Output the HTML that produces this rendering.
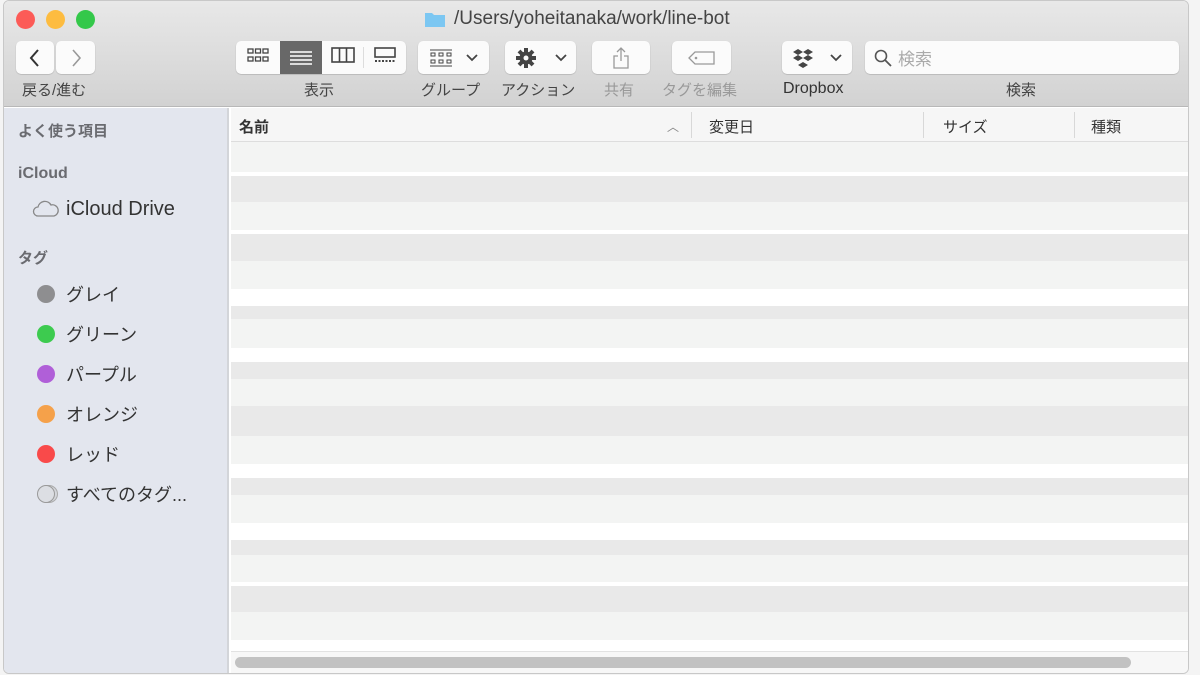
<!DOCTYPE html>
<html><head><meta charset="utf-8"><style>
*{margin:0;padding:0;box-sizing:border-box}
body{width:1200px;height:675px;background:#f4f4f4;position:relative;overflow:hidden;font-family:"Liberation Sans","Noto Sans CJK JP",sans-serif}
.win{position:absolute;left:3px;top:0;width:1186px;height:674px;border-radius:6px;overflow:hidden;background:#fff;border:1px solid #c8c8c8}
.tb{position:absolute;left:0;top:0;width:100%;height:106px;background:linear-gradient(#e8e8e8,#d2d2d2);border-bottom:1px solid #b8b8b8}
.dot{position:absolute;top:9px;width:19px;height:19px;border-radius:50%}
.title{position:absolute;top:7px;left:420px;font-size:19px;color:#444;display:flex;align-items:center;gap:8px}
.btn{position:absolute;top:40px;height:33px;background:#fbfbfb;border-radius:5px;box-shadow:0 0.5px 1px rgba(0,0,0,.25);display:flex;align-items:center;justify-content:center}
.lbl{position:absolute;top:78px;font-size:15px;color:#444;text-align:center}
.sb{position:absolute;left:0;top:107px;width:225px;bottom:0;background:#e3e6ee;border-right:2px solid #d3d5d9}
.sh{position:absolute;left:14px;font-size:15px;color:#6a6b70;font-weight:bold}
.it{position:absolute;left:62px;font-size:18px;color:#333}
.cd{position:absolute;left:33px;width:18px;height:18px;border-radius:50%}
.hd{position:absolute;left:227px;right:0;top:107px;height:34px;background:#f6f6f6;border-bottom:1px solid #ddd;font-size:15px;color:#333}
.hd span{position:absolute;top:8px}
.sep{position:absolute;top:4px;width:1px;height:26px;background:#d8d8d8}
.b{position:absolute;left:227px;right:0}
</style></head><body>
<div class="win">
<div class="tb">
<div class="dot" style="left:12px;background:#fc5b57"></div>
<div class="dot" style="left:42px;background:#fdbc40"></div>
<div class="dot" style="left:72px;background:#34c84a"></div>
<div class="title"><svg width="22" height="18"><path d="M1 3h7l2 2h11v12H1z" fill="#7cc7f2"/></svg>/Users/yoheitanaka/work/line-bot</div>
<div class="btn" style="left:12px;width:38px"><svg width="14" height="20"><path d="M10 2L3 10l7 8" stroke="#333" stroke-width="2" fill="none"/></svg></div>
<div class="btn" style="left:52px;width:39px"><svg width="14" height="20"><path d="M4 2l7 8-7 8" stroke="#999" stroke-width="1.6" fill="none"/></svg></div>
<div class="lbl" style="left:18px">戻る/進む</div>
<div class="btn" style="left:232px;width:170px;justify-content:flex-start;overflow:hidden">
<div style="width:44px;text-align:center"><svg width="22" height="16"><g fill="none" stroke="#444" stroke-width="1.3"><rect x="1" y="2" width="5" height="4"/><rect x="8.5" y="2" width="5" height="4"/><rect x="16" y="2" width="5" height="4"/><rect x="1" y="10" width="5" height="4"/><rect x="8.5" y="10" width="5" height="4"/><rect x="16" y="10" width="5" height="4"/></g></svg></div>
<div style="width:42px;height:33px;background:#686868;display:flex;align-items:center;justify-content:center"><svg width="22" height="16"><path d="M0 2h22M0 6h22M0 10h22M0 14h22" stroke="#fff" stroke-width="1.5"/></svg></div>
<div style="width:42px;text-align:center;border-right:1px solid #ddd"><svg width="24" height="16"><rect x="1" y="1" width="22" height="14" fill="none" stroke="#444" stroke-width="1.6"/><path d="M8.5 1v14M15.5 1v14" stroke="#444" stroke-width="1.6"/></svg></div>
<div style="width:42px;text-align:center"><svg width="24" height="18"><rect x="2" y="2" width="20" height="9" fill="none" stroke="#444" stroke-width="1.6"/><path d="M2 15h20" stroke="#444" stroke-width="2" stroke-dasharray="2 1.5"/></svg></div>
</div>
<div class="lbl" style="left:300px">表示</div>
<div class="btn" style="left:414px;width:71px;gap:14px"><svg width="22" height="18"><path d="M0 1h22M0 17h22" stroke="#444"/><g fill="none" stroke="#444"><rect x="1" y="4" width="4" height="3"/><rect x="9" y="4" width="4" height="3"/><rect x="17" y="4" width="4" height="3"/><rect x="1" y="11" width="4" height="3"/><rect x="9" y="11" width="4" height="3"/><rect x="17" y="11" width="4" height="3"/></g></svg><svg width="12" height="8"><path d="M1 1l5 5 5-5" stroke="#444" stroke-width="1.8" fill="none"/></svg></div>
<div class="lbl" style="left:417px">グループ</div>
<div class="btn" style="left:501px;width:71px;gap:18px"><svg width="22" height="22" viewBox="0 0 22 22"><g stroke="#444" stroke-width="4"><path d="M11 1v20M1 11h20M4 4l14 14M18 4L4 18"/></g><circle cx="11" cy="11" r="6.5" fill="#444"/><circle cx="11" cy="11" r="2.5" fill="#fbfbfb"/></svg><svg width="12" height="8"><path d="M1 1l5 5 5-5" stroke="#444" stroke-width="1.8" fill="none"/></svg></div>
<div class="lbl" style="left:497px">アクション</div>
<div class="btn" style="left:588px;width:58px"><svg width="18" height="24"><path d="M9 2v13M5 6l4-4 4 4M6 10H2v12h14V10h-4" stroke="#999" stroke-width="1.3" fill="none"/></svg></div>
<div class="lbl" style="left:600px;color:#999">共有</div>
<div class="btn" style="left:668px;width:59px"><svg width="28" height="16"><path d="M1 8l6-6h19v12H7z" stroke="#999" stroke-width="1.3" fill="none"/><circle cx="8" cy="8" r="1.3" fill="#999"/></svg></div>
<div class="lbl" style="left:658px;color:#999">タグを編集</div>
<div class="btn" style="left:778px;width:70px;gap:16px"><svg width="22" height="20"><g fill="#444"><path d="M6 1l5 3-5 3-5-3zM16 1l5 3-5 3-5-3zM6 7l5 3-5 3-5-3zM16 7l5 3-5 3-5-3zM11 14l5 3-5 3-5-3z"/></g></svg><svg width="12" height="8"><path d="M1 1l5 5 5-5" stroke="#444" stroke-width="1.8" fill="none"/></svg></div>
<div class="lbl" style="left:779px;top:79px;color:#333;font-size:16px">Dropbox</div>
<div class="btn" style="left:861px;width:314px;justify-content:flex-start;padding-left:9px;gap:6px"><svg width="18" height="18"><circle cx="7" cy="7" r="5.5" stroke="#555" stroke-width="1.6" fill="none"/><path d="M11 11l6 6" stroke="#555" stroke-width="1.8"/></svg><span style="font-size:17px;color:#aaa">検索</span></div>
<div class="lbl" style="left:1002px">検索</div>
</div>
<div class="sb">
<div class="sh" style="top:12px">よく使う項目</div>
<div class="sh" style="top:57px;font-size:16px">iCloud</div>
<svg style="position:absolute;left:28px;top:90px" width="28" height="20"><path d="M6 18a4.5 4.5 0 0 1 0-9 7 7 0 0 1 13-2 5.5 5.5 0 0 1 3 11z" fill="none" stroke="#888" stroke-width="1.3"/></svg>
<div class="it" style="top:90px;font-size:20px">iCloud Drive</div>
<div class="sh" style="top:139px">タグ</div>
<div class="cd" style="top:177px;background:#8e8e90"></div><div class="it" style="top:173px">グレイ</div>
<div class="cd" style="top:217px;background:#3dcb4f"></div><div class="it" style="top:213px">グリーン</div>
<div class="cd" style="top:257px;background:#b05fd8"></div><div class="it" style="top:253px">パープル</div>
<div class="cd" style="top:297px;background:#f5a14a"></div><div class="it" style="top:293px">オレンジ</div>
<div class="cd" style="top:337px;background:#f94a4a"></div><div class="it" style="top:333px">レッド</div>
<div class="cd" style="top:377px;left:36px;background:#d4d6db;border:1px solid #aaa"></div><div class="cd" style="top:377px;background:#dcdee3;border:1px solid #999"></div><div class="it" style="top:373px">すべてのタグ...</div>
</div>
<div class="hd"><span style="left:8px;font-weight:bold">名前</span><span style="left:436px;color:#888;font-size:12px;top:10px">︿</span><div class="sep" style="left:460px"></div><span style="left:478px">変更日</span><div class="sep" style="left:692px"></div><span style="left:712px">サイズ</span><div class="sep" style="left:843px"></div><span style="left:860px">種類</span></div>
<div class="b" style="top:141px;height:510px;background:#f3f4f3"></div>
<div class="b" style="top:171px;height:4px;background:#fff"></div>
<div class="b" style="top:175px;height:26px;background:#e9e9e9"></div>
<div class="b" style="top:229px;height:4px;background:#fff"></div>
<div class="b" style="top:233px;height:27px;background:#e9e9e9"></div>
<div class="b" style="top:288px;height:17px;background:#fff"></div>
<div class="b" style="top:305px;height:13px;background:#e9e9e9"></div>
<div class="b" style="top:347px;height:14px;background:#fff"></div>
<div class="b" style="top:361px;height:17px;background:#e9e9e9"></div>
<div class="b" style="top:405px;height:30px;background:#e9e9e9"></div>
<div class="b" style="top:463px;height:14px;background:#fff"></div>
<div class="b" style="top:477px;height:17px;background:#e9e9e9"></div>
<div class="b" style="top:522px;height:17px;background:#fff"></div>
<div class="b" style="top:539px;height:15px;background:#e9e9e9"></div>
<div class="b" style="top:581px;height:4px;background:#fff"></div>
<div class="b" style="top:585px;height:26px;background:#e9e9e9"></div>
<div class="b" style="top:639px;height:11px;background:#fff"></div>
<div class="b" style="top:650px;height:24px;background:#f7f7f7;border-top:1px solid #e2e2e2"></div>
<div style="position:absolute;left:231px;top:656px;width:896px;height:11px;border-radius:6px;background:#c2c2c2"></div>
</div>
</body></html>
